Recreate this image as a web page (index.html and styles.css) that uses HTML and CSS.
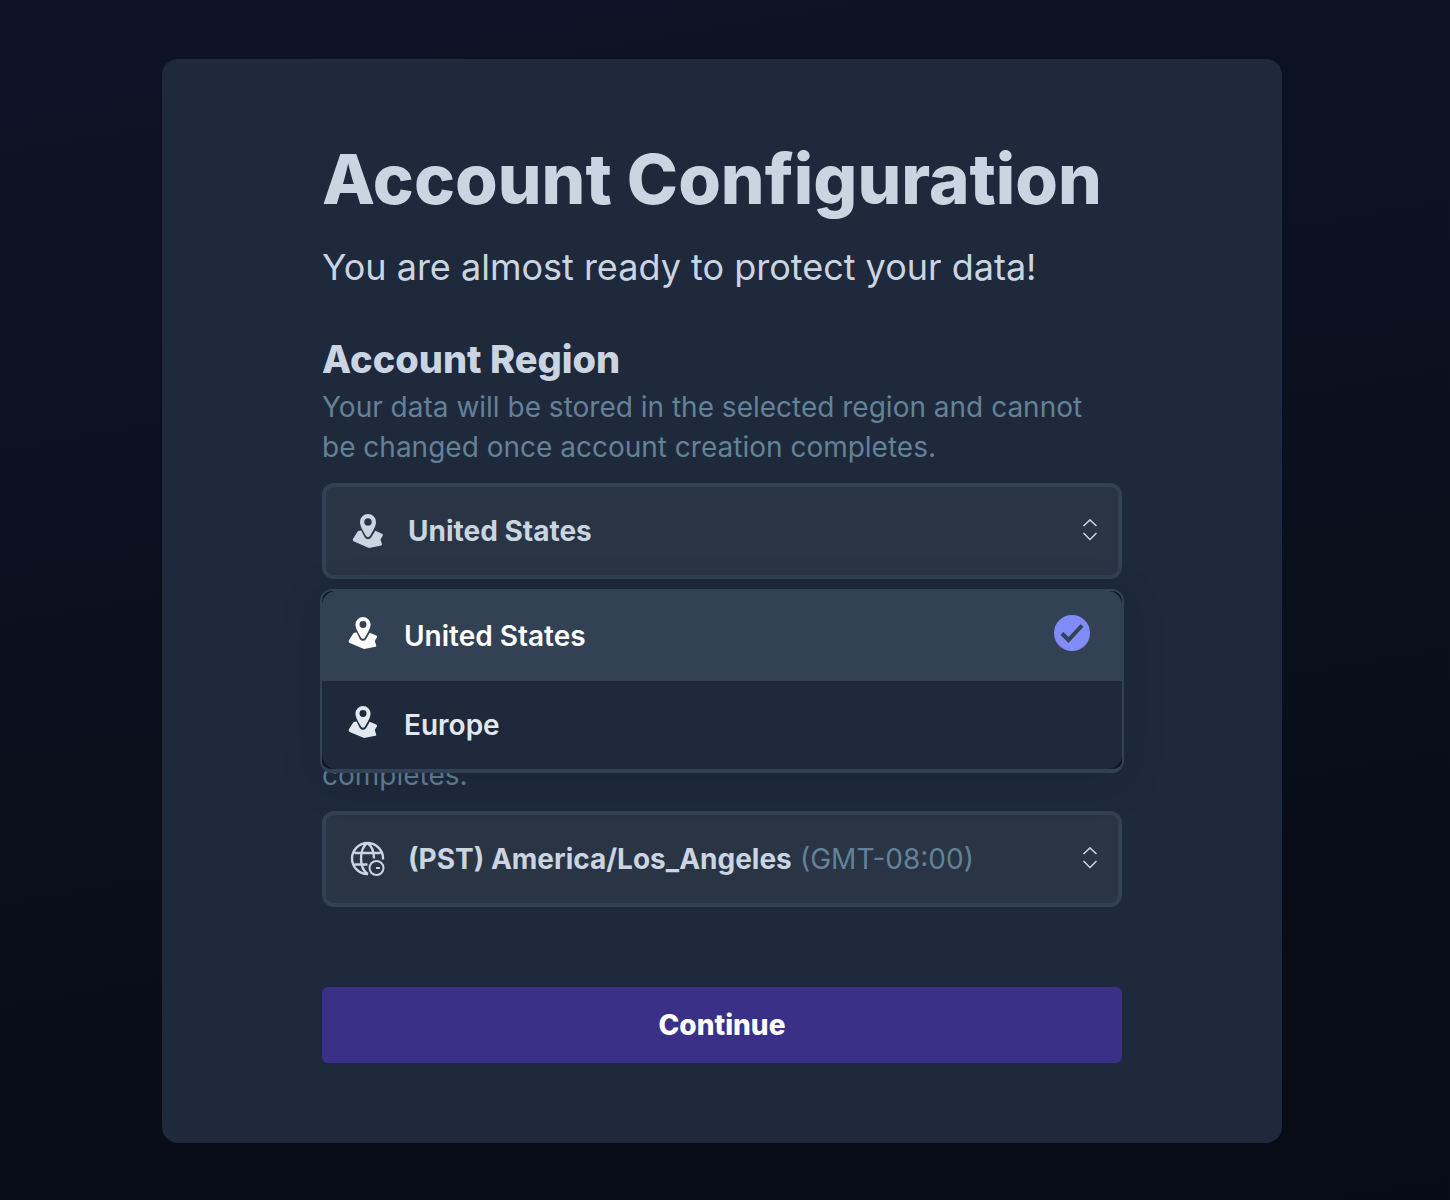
FILE: index.html
```html
<!DOCTYPE html>
<html lang="en">
<head>
    <meta charset="UTF-8">
    <meta name="viewport" content="width=device-width, initial-scale=1.0">
    <title>Account Configuration</title>
    <link rel="stylesheet" href="styles.css">
</head>
<body>
    <svg class="sprite" aria-hidden="true">
        <symbol id="pin" viewBox="0 0 36 36">
            <path fill="currentColor" fill-rule="evenodd" d="M18 1a8 8 0 0 1 8 8c0 4.500-3.500 9.500-6 14a2.300 2.300 0 0 1-4 0C13.500 18.500 10 13.500 10 9a8 8 0 0 1 8-8zm0 4.200a3.700 3.700 0 1 0 0 7.400a3.700 3.700 0 0 0 0-7.400z"/>
            <path fill="currentColor" d="M7.300 19q.5-1 1.700-1.200l2.300-.3 3.200 6.500q1.400 2.300 3.500 2.300t3.500-2.300l3.700-6.300 6.800 3q1.300.8.800 1.800l-2.300 4 1.500 4.800q.2 1-.8 1.300l-10.800 2.200q-1.400.3-2.600-.3L4 28.500q-1.700-.9-1.200-2.200z"/>
        </symbol>
        <symbol id="sort" viewBox="0 0 16 24">
            <path fill="none" stroke="currentColor" stroke-width="1.500" d="M1.500 7L8 .9 14.500 7M1.500 14L8 20.500l6.500-6.500"/>
        </symbol>
    </svg>

    <main class="card">
        <h1>Account Configuration</h1>
        <p class="lead">You are almost ready to protect your data!</p>

        <form>
            <section class="field">
                <h2><label for="region">Account Region</label></h2>
                <p class="hint" id="region-hint">Your data will be stored in the selected region and cannot be changed once account creation completes.</p>
                <div class="picker">
                    <svg class="icon"><use href="#pin"/></svg>
                    <select id="region" aria-describedby="region-hint">
                        <option>United States</option>
                    </select>
                    <svg class="sort"><use href="#sort"/></svg>
                    <ul class="menu" role="listbox" aria-label="Account Region">
                        <li class="option active" role="option" aria-selected="true">
                            <svg class="icon"><use href="#pin"/></svg>
                            <span>United States</span>
                            <svg class="check" viewBox="0 0 36 36">
                                <circle cx="18" cy="18" r="18" fill="#818cf8"/>
                                <path d="M8 18.500l6.500 6.500L28 10.500" fill="none" stroke="#334155" stroke-width="4"/>
                            </svg>
                        </li>
                        <li class="option" role="option" aria-selected="false">
                            <svg class="icon"><use href="#pin"/></svg>
                            <span>Europe</span>
                        </li>
                    </ul>
                </div>
            </section>

            <section class="field">
                <h2><label for="timezone">Account Timezone</label></h2>
                <p class="hint" id="timezone-hint">Your data will be reported in the selected timezone and the timezone cannot be changed once account creation completes.</p>
                <div class="picker">
                    <svg class="icon" viewBox="0 0 36 36" fill="none" stroke="currentColor" stroke-width="2.400">
                        <path d="M33 18.500A15.500 15.500 0 1 0 18 33M17.500 2c-4.500 3-6.500 9-6.500 15.500S13 30 18 33M17.500 2c4 3 6.500 8 6.500 15.500M4.500 12h26M4.500 23.500h13"/>
                        <circle cx="26.500" cy="27" r="7" stroke-width="2"/>
                        <path d="M26 27h4" stroke-width="2"/>
                    </svg>
                    <select id="timezone" aria-describedby="timezone-hint">
                        <option>(PST) America/Los_Angeles</option>
                    </select>
                    <span class="offset">(GMT-08:00)</span>
                    <svg class="sort"><use href="#sort"/></svg>
                </div>
            </section>

            <button type="submit" class="continue">Continue</button>
        </form>
    </main>
</body>
</html>
```

FILE: styles.css
```css
* {
    box-sizing: border-box;
}
body {
    margin: 0;
    min-height: 100vh;
    padding: 59px 168px 57px 162px;
    font-family: Inter, "Liberation Sans", sans-serif;
    font-size: 28px;
    line-height: 40px;
    color: #cbd5e1;
    background: linear-gradient(170deg, #0e1327, #09101c 55%, #070b15);
}
h1, h2, p, ul {
    margin: 0;
    padding: 0;
}
.sprite {
    display: none;
}
.card {
    padding: 80px 160px;
    border-radius: 16px;
    background: #1e293b;
}
h1 {
    margin-bottom: 20px;
    font-size: 69px;
    line-height: 80px;
    font-weight: 800;
}
.lead {
    font-size: 36px;
    line-height: 56px;
}
.field {
    margin-top: 40px;
}
.field + .field {
    margin-top: 44px;
}
h2 {
    margin-bottom: 4px;
    font-size: 38px;
    line-height: 48px;
    font-weight: 800;
}
.hint {
    margin-bottom: 16px;
    color: #648297;
}
.picker {
    position: relative;
    display: flex;
    align-items: center;
    height: 96px;
    padding: 0 20px 0 24px;
    border: 4px solid #334155;
    border-radius: 12px;
    background: #293445;
}
.icon {
    width: 36px;
    height: 36px;
    flex: none;
}
.picker select {
    margin: 0 8px 0 22px;
    padding: 0;
    border: 0;
    appearance: none;
    font: inherit;
    font-weight: 700;
    color: inherit;
    background: none;
}
.offset {
    color: #648297;
}
.sort {
    width: 16px;
    height: 24px;
    margin-left: auto;
}

/* open list */
.menu {
    position: absolute;
    z-index: 1;
    top: 102px;
    left: -6px;
    right: -6px;
    overflow: hidden;
    list-style: none;
    border: 2px solid #334155;
    border-bottom-width: 4px;
    border-radius: 12px;
    background: #0b111c;
    box-shadow: 0 8px 40px rgba(15, 23, 42, 0.2);
}
.option {
    display: flex;
    align-items: center;
    gap: 24px;
    height: 90px;
    padding: 0 32px 0 24px;
    font-weight: 600;
    color: #e2e8f0;
    background: #1e293b;
}
.option:first-child {
    border-radius: 14px 14px 0 0;
}
.option:last-child {
    height: 88px;
    border-radius: 0 0 14px 14px;
}
.option svg {
    margin-bottom: 6px;
}
.option .icon {
    width: 34px;
    height: 34px;
}
.option.active {
    color: #fff;
    background: #334155;
}
.check {
    width: 36px;
    height: 36px;
    margin-left: auto;
}
.continue {
    width: 100%;
    height: 76px;
    margin-top: 80px;
    border: 0;
    border-radius: 6px;
    font: inherit;
    font-weight: 800;
    color: #fff;
    background: #3b3087;
}
```
